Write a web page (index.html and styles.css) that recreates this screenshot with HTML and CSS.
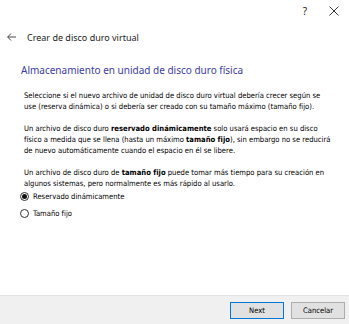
FILE: index.html
```html
<!DOCTYPE html>
<html lang="es">
<head>
    <meta charset="UTF-8">
    <title>Crear de disco duro virtual</title>
    <link rel="stylesheet" href="styles.css">
</head>
<body>
    <div class="window">
        <div class="titlebar">
            <span class="title-btn">?</span>
            <span class="title-btn close">
                <svg width="10" height="10" viewBox="0 0 10 10"><path d="M0.5 0.5 L9.5 9.5 M9.5 0.5 L0.5 9.5" stroke="#222" stroke-width="0.9" fill="none"/></svg>
            </span>
        </div>
        <div class="wizard-head">
            <svg class="back" width="9" height="8" viewBox="0 0 9 8"><path d="M4 0.5 L0.7 4 L4 7.5 M0.7 4 H9" stroke="#333" stroke-width="0.9" fill="none"/></svg>
            <span>Crear de disco duro virtual</span>
        </div>
        <div class="page">
            <h1>Almacenamiento en unidad de disco duro física</h1>
            <p>Seleccione si el nuevo archivo de unidad de disco duro virtual debería crecer según se use (reserva dinámica) o si debería ser creado con su tamaño máximo (tamaño fijo).</p>
            <p>Un archivo de disco duro <b>reservado dinámicamente</b> solo usará espacio en su disco físico a medida que se llena (hasta un máximo <b>tamaño fijo</b>), sin embargo no se reducirá de nuevo automáticamente cuando el espacio en él se libere.</p>
            <p class="last">Un archivo de disco duro de <b>tamaño fijo</b> puede tomar más tiempo para su creación en algunos sistemas, pero normalmente es más rápido al usarlo.</p>
            <div class="options">
                <label class="option"><input type="radio" name="kind" checked> Reservado dinámicamente</label>
                <label class="option"><input type="radio" name="kind"> Tamaño fijo</label>
            </div>
        </div>
        <div class="footer">
            <button class="default">Next</button>
            <button>Cancelar</button>
        </div>
    </div>
</body>
</html>
```

FILE: styles.css
```css
body {
    margin: 0;
    background-color: #ffffff;
    font-family: Tahoma, "DejaVu Sans Condensed", "Liberation Sans", sans-serif;
    color: #000;
}
.window {
    width: 349px;
    height: 324px;
    display: flex;
    flex-direction: column;
}
.titlebar {
    height: 22px;
    display: flex;
    justify-content: flex-end;
    align-items: center;
    padding-right: 10px;
    gap: 22px;
}
.title-btn {
    font-family: "Noto Sans", sans-serif;
    font-size: 10px;
    color: #222;
    display: flex;
    align-items: center;
}
.close svg {
    display: block;
}
.wizard-head {
    height: 30px;
    display: flex;
    align-items: center;
    padding-left: 7px;
    font-family: "Noto Sans", sans-serif;
    font-size: 9px;
    color: #222;
}
.wizard-head .back {
    margin-right: 11px;
}
.page {
    flex: 1;
    padding: 0 17px 0 24px;
}
.page h1 {
    margin: 11px 0 12px -3px;
    font-family: "Noto Sans", sans-serif;
    font-weight: normal;
    font-size: 10px;
    line-height: 15px;
    color: #3c3ca8;
}
.page p {
    margin: 0 0 11px;
    font-size: 7.6px;
    line-height: 11px;
}
.page p.last {
    margin-bottom: 0;
}
.options {
    display: flex;
    flex-direction: column;
    gap: 5px;
    margin-top: 1px;
}
.option {
    display: flex;
    align-items: center;
    font-size: 7.6px;
    height: 12px;
}
.option input {
    appearance: none;
    margin: 0 4px 0 -4px;
    width: 9px;
    height: 9px;
    border: 1px solid #333;
    border-radius: 50%;
    background-color: #fff;
    display: flex;
    align-items: center;
    justify-content: center;
}
.option input:checked::after {
    content: "";
    width: 5px;
    height: 5px;
    border-radius: 50%;
    background-color: #111;
}
.footer {
    height: 28px;
    background-color: #f0f0f0;
    border-top: 1px solid #e3e3e3;
    display: flex;
    justify-content: flex-end;
    align-items: center;
    gap: 7px;
    padding-right: 4px;
}
button {
    width: 54px;
    height: 17px;
    font-family: Tahoma, "DejaVu Sans Condensed", "Liberation Sans", sans-serif;
    font-size: 7.6px;
    background-color: #e1e1e1;
    border: 1px solid #adadad;
    padding: 0;
    color: #000;
}
button.default {
    border-color: #0078d7;
}
```
